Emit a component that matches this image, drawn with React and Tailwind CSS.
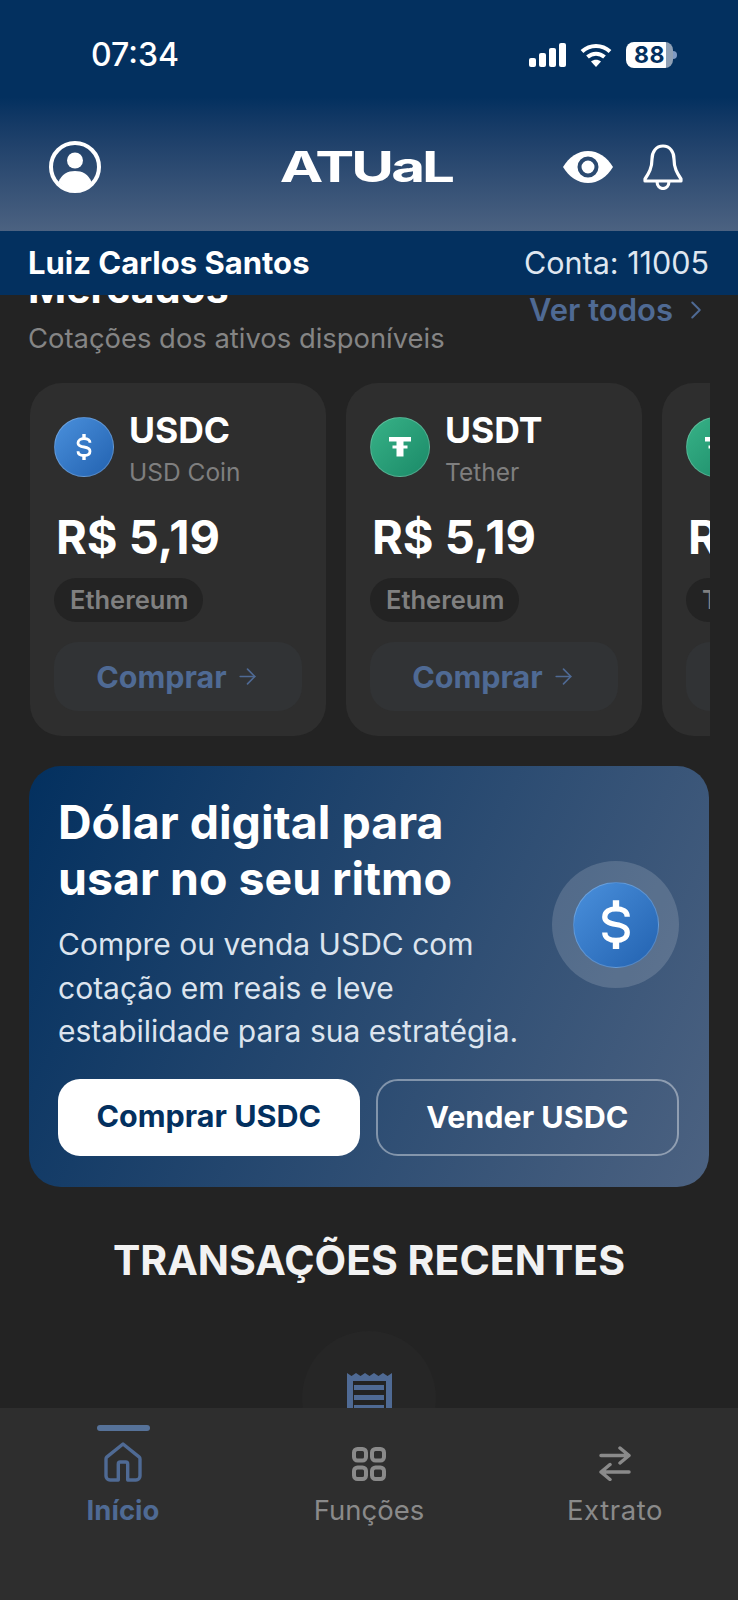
import { ChevronRight, ArrowRight } from "lucide-react";

function Coin({ tone, size, children }) {
  return (
    <div className={`${size} ${tone} shrink-0 rounded-full flex items-center justify-center text-white border border-white/20`}>
      {children}
    </div>
  );
}

function Dollar({ className }) {
  return (
    <svg viewBox="0 0 16 26" className={className} fill="none" stroke="white" strokeWidth="2.800" strokeLinecap="butt">
      <path d="M14 8.800C14 6 11.500 4.600 8 4.600S2 6.300 2 9s2.500 3.500 6 4 6 1.500 6 4.200-2.500 4.300-6 4.300-6-1.500-6-4.300" />
      <path d="M8 0v4.600M8 21.500V26" strokeWidth="3.400" />
    </svg>
  );
}

function Tether({ className }) {
  return (
    <svg viewBox="0 0 22 20" className={className} fill="white">
      <rect x="0" y="0" width="22" height="4.500" />
      <rect x="3.500" y="8.500" width="15" height="3" />
      <rect x="7.500" y="0" width="7" height="19.500" />
    </svg>
  );
}

function MarketCard({ coin, symbol, name, net }) {
  return (
    <div className="w-[296px] h-[353px] shrink-0 rounded-[32px] bg-[#2e2e2e] p-6 flex flex-col">
      <div className="flex items-start gap-[15px]">
        <div className="mt-[10px]">{coin}</div>
        <div className="pt-[6px]">
          <p className="text-[35.500px] leading-[36px] font-bold text-white">{symbol}</p>
          <p className="text-[24.500px] leading-[36px] mt-[5px] text-[#7f7f7f]">{name}</p>
        </div>
      </div>
      <p className="mt-[19px] ml-[2px] text-[47px] leading-[56px] font-bold text-white whitespace-nowrap">R$ 5,19</p>
      <div className="mt-[13px] self-start h-11 pl-4 pr-[15px] rounded-full bg-[#232323] flex items-center text-[25.500px] font-semibold text-[#808080]">
        {net}
      </div>
      <button className="mt-5 h-[69px] rounded-3xl bg-[#313335] flex items-center justify-center gap-[8px] text-[30.500px] font-bold text-[#4f6a94]">
        Comprar
        <ArrowRight size={25} strokeWidth={1.6} />
      </button>
    </div>
  );
}

export default function App() {
  return (
    <div className="h-[1600px] w-[738px] overflow-hidden flex flex-col bg-[#232323] font-['Inter',sans-serif]">
      {/* HEADER */}
      <header className="h-[231px] shrink-0 bg-gradient-to-b from-[#03305f] from-[42%] to-[#4c6281] text-white">
        <div className="h-[110px] pt-[33px] pl-[91px] pr-[61px] flex justify-between">
          <span className="text-[32px] leading-[44px] font-medium">07:34</span>
          <div className="flex items-start gap-[14px] pt-[10px]">
            <svg viewBox="0 0 37 24" className="w-[37px] h-6" fill="white">
              <rect x="0" y="15" width="7" height="9" rx="2" />
              <rect x="10" y="10" width="7" height="14" rx="2" />
              <rect x="20" y="5" width="7" height="19" rx="2" />
              <rect x="30" y="0" width="7" height="24" rx="2" />
            </svg>
            <svg viewBox="0 0 32 24" className="w-8 h-6" fill="none" stroke="white" strokeWidth="4">
              <path d="M2 8.500c8-7.500 20-7.500 28 0M7.500 14c5-4.500 12-4.500 17 0" />
              <path d="M16 24l-5-5.500c3-2.500 7-2.500 10 0z" fill="white" stroke="none" />
            </svg>
            <div className="flex items-center">
              <div className="w-[47px] h-[26px] -mt-px rounded-lg bg-gradient-to-r from-white from-[85%] to-[#8fa0b5] to-[85%] text-[#03305f] text-[23px] leading-[26px] font-bold text-center tracking-wide">
                88
              </div>
              <div className="w-[4px] h-2 -mt-px rounded-r-full bg-[#7f9ac4]" />
            </div>
          </div>
        </div>
        <div className="mt-[31px] pl-[49px] pr-[55px] grid grid-cols-3 items-center">
          <svg viewBox="0 0 52 52" className="w-[52px] h-[52px]">
            <circle cx="26" cy="26" r="24" fill="none" stroke="white" strokeWidth="4" />
            <circle cx="26" cy="19.500" r="8" fill="white" />
            <path d="M9.500 41c3-8 9.500-11 16.500-11s13.500 3 16.500 11c-4 5-10 8-16.500 8s-12.500-3-16.500-8z" fill="white" />
          </svg>
          <div className="flex justify-center">
            <span className="inline-block scale-x-[1.39] text-[42px] leading-[52px] font-bold tracking-[-0.05em]">ATUaL</span>
          </div>
          <div className="flex items-center justify-end gap-[30px]">
            <svg viewBox="0 0 50 32" className="w-[50px] h-8">
              <path d="M0 16C6 6 15 0 25 0s19 6 25 16c-6 10-15 16-25 16S6 26 0 16z" fill="white" />
              <circle cx="25" cy="16" r="8.500" fill="none" stroke="#2b4a70" strokeWidth="4" />
            </svg>
            <svg viewBox="0 0 40 46" className="w-10 h-[46px]" fill="none" stroke="white" strokeWidth="3.200" strokeLinejoin="round">
              <path d="M20 2c-7 0-11 6-11 13 0 9-3 14-7 20v2h36v-2c-4-6-7-11-7-20 0-7-4-13-11-13z" />
              <path d="M14 37c0 5 3 7.500 6 7.500s6-2.500 6-7.500" />
            </svg>
          </div>
        </div>
      </header>

      {/* NAME BAR */}
      <div className="h-16 shrink-0 relative z-10 bg-[#03305f] pl-[28px] pr-[29px] flex items-center justify-between text-white">
        <span className="text-[31px] font-bold">Luiz Carlos Santos</span>
        <span className="text-[30.500px] text-[#dfe6f0]">Conta: 11005</span>
      </div>

      {/* SCROLLED CONTENT */}
      <main className="flex-1 min-h-0 overflow-hidden">
        <div className="-mt-[31px]">
          <div className="pl-[28px] pr-[29px] flex justify-between items-start">
            <div>
              <h2 className="text-[41px] leading-[48px] font-bold text-white">Mercados</h2>
              <p className="mt-[8px] text-[27.400px] leading-[36px] text-[#858585]">Cotações dos ativos disponíveis</p>
            </div>
            <div className="mt-[28px] -mr-[2px] flex items-center gap-[8px] text-[31px] leading-[36px] font-semibold text-[#4f6a94]">
              Ver todos
              <ChevronRight size={30} strokeWidth={1.6} />
            </div>
          </div>

          <div className="mt-[27px] ml-[30px] mr-[28px] flex gap-5 overflow-hidden">
            <MarketCard
              symbol="USDC"
              name="USD Coin"
              net="Ethereum"
              coin={<Coin size="w-[60px] h-[60px]" tone="bg-gradient-to-br from-[#4a90dc] to-[#2262b0]"><Dollar className="w-4 h-[26px]" /></Coin>}
            />
            <MarketCard
              symbol="USDT"
              name="Tether"
              net="Ethereum"
              coin={<Coin size="w-[60px] h-[60px]" tone="bg-gradient-to-br from-[#37b287] to-[#1a8a68]"><Tether className="w-[22px] h-5" /></Coin>}
            />
            <MarketCard
              symbol="USDT"
              name="Tether"
              net="Tron"
              coin={<Coin size="w-[60px] h-[60px]" tone="bg-gradient-to-br from-[#37b287] to-[#1a8a68]"><Tether className="w-[22px] h-5" /></Coin>}
            />
          </div>

          {/* PROMO */}
          <section className="mt-[30px] mx-[29px] h-[421px] rounded-[32px] bg-[linear-gradient(115deg,#03305f_0%,#4c6281_100%)] pl-[29px] pr-[30px] pt-[28px]">
            <div className="flex items-start justify-between">
              <div>
                <h3 className="text-[46.500px] leading-[56px] font-bold text-white whitespace-nowrap">
                  Dólar digital para
                  <br />
                  usar no seu ritmo
                </h3>
                <p className="mt-[17px] text-[30px] leading-[43.500px] text-[#dce4ee] whitespace-nowrap">
                  Compre ou venda USDC com
                  <br />
                  cotação em reais e leve
                  <br />
                  estabilidade para sua estratégia.
                </p>
              </div>
              <div className="mt-[67px] w-[127px] h-[127px] shrink-0 rounded-full bg-white/15 flex items-center justify-center">
                <Coin size="w-[86px] h-[86px]" tone="bg-gradient-to-br from-[#4a90dc] to-[#2262b0]"><Dollar className="w-[30px] h-[49px]" /></Coin>
              </div>
            </div>
            <div className="mt-[25px] flex gap-[16px]">
              <button className="w-[302px] h-[77px] pb-[3px] rounded-[22px] bg-white text-[#03305f] text-[30.500px] font-bold">Comprar USDC</button>
              <button className="w-[304px] h-[77px] rounded-[22px] border-2 border-white/40 text-white text-[30.500px] font-bold">Vender USDC</button>
            </div>
          </section>

          <h2 className="mt-[49px] text-center text-[41px] leading-[48px] font-bold text-[#f2f2f2]">TRANSAÇÕES RECENTES</h2>

          {/* EMPTY STATE */}
          <div className="mt-[47px] mx-auto w-[134px] h-[134px] rounded-full bg-[#262626] flex justify-center pt-[42px]">
            <svg viewBox="0 0 45 54" className="w-[45px] h-[54px]">
              <path d="M0 0l4.500 3 4.500-3 4.500 3 4.500-3 4.500 3 4.500-3 4.500 3 4.500-3 4.500 3 4.500-3v54H0z" fill="#4f6a94" />
              <rect x="6" y="8" width="33" height="46" fill="#232323" />
              <rect x="7" y="12" width="30" height="5" fill="#4f6a94" />
              <rect x="7" y="22" width="30" height="5" fill="#4f6a94" />
              <rect x="7" y="32" width="30" height="5" fill="#4f6a94" />
            </svg>
          </div>
        </div>
      </main>

      {/* BOTTOM NAV */}
      <nav className="h-[192px] shrink-0 relative z-10 bg-[#2e2e2e] grid grid-cols-3 text-[27.500px] text-[#8a8a8a]">
        <a className="flex flex-col items-center text-[#4f6a94] font-bold">
          <span className="mt-[17px] w-[53px] h-[6px] rounded-full bg-[#567299]" />
          <svg viewBox="0 0 38 40" className="mt-[11px] w-[38px] h-10" fill="none" stroke="currentColor" strokeWidth="3.400" strokeLinejoin="round">
            <path d="M14.300 38H6a4 4 0 0 1-4-4V17a3 3 0 0 1 1-2.200L19 2l16 12.800a3 3 0 0 1 1 2.200v17a4 4 0 0 1-4 4h-8.300V22a2 2 0 0 0-2-2h-5.400a2 2 0 0 0-2 2z" />
          </svg>
          <span className="mt-[8px] leading-[40px]">Início</span>
        </a>
        <a className="flex flex-col items-center">
          <svg viewBox="0 0 34 34" className="mt-[39px] w-[34px] h-[34px]" fill="none" stroke="currentColor" strokeWidth="4">
            <rect x="2" y="2" width="12" height="11.500" rx="3.500" />
            <rect x="20" y="2" width="12" height="11.500" rx="3.500" />
            <rect x="2" y="20.500" width="12" height="11.500" rx="3.500" />
            <rect x="20" y="20.500" width="12" height="11.500" rx="3.500" />
          </svg>
          <span className="mt-[9px] leading-[40px]">Funções</span>
        </a>
        <a className="flex flex-col items-center">
          <svg viewBox="0 0 32 35" className="mt-[38px] w-8 h-[35px]" fill="none" stroke="currentColor" strokeWidth="3.500" strokeLinecap="round" strokeLinejoin="round">
            <path d="M2 9.500h28M21 2l9 7.500-9 7.500" />
            <path d="M30 26H2M11 18.500L2 26l9 7.500" />
          </svg>
          <span className="mt-[9px] leading-[40px] tracking-[0.02em]">Extrato</span>
        </a>
      </nav>
    </div>
  );
}
